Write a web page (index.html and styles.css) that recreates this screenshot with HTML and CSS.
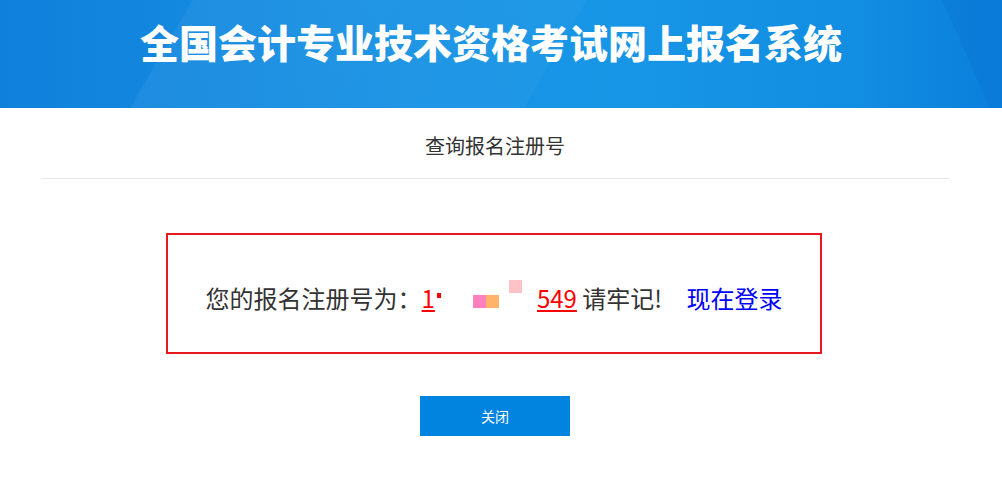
FILE: index.html
```html
<!DOCTYPE html>
<html lang="zh-CN">

<head>
    <meta charset="UTF-8">
    <meta name="viewport" content="width=device-width, initial-scale=1.0">
    <title>查询报名注册号</title>
    <link rel="stylesheet" href="styles.css">
</head>

<body>
    <div class="cabecera">
        <h1>全国会计专业技术资格考试网上报名系统</h1>
    </div>

    <div class="contenido">
        <h3 class="subtitulo">查询报名注册号</h3>

        <div class="cajaRoja">
            您的报名注册号为：<a class="numero" href="#">1<span class="oculto"><i class="p1"></i><i class="p2"></i><i class="p3"></i><i class="p4"></i></span>549</a> 请牢记!
            <a class="entrar" href="#">现在登录</a>
        </div>

        <div class="botones">
            <input type="button" class="boton" value="关闭" />
        </div>
    </div>
</body>

</html>
```

FILE: styles.css
```css
body {
    margin: 0;
    font-family: "Noto Sans CJK SC", "Microsoft YaHei", sans-serif;
    background-color: #fff;
    color: #333;
}

.cabecera {
    position: relative;
    overflow: hidden;
    height: 108px;
    background: linear-gradient(90deg, #0f80db 0%, #1790e3 35%, #1896e6 60%, #128ee2 85%, #0a7fdc 100%);
}

/* Franjas diagonales del fondo */
.cabecera::before {
    content: "";
    position: absolute;
    top: 0;
    left: 0;
    width: 100%;
    height: 100%;
    background: linear-gradient(120deg, rgba(255, 255, 255, 0) 0%, rgba(255, 255, 255, 0) 18%, rgba(255, 255, 255, 0.05) 18.2%, rgba(255, 255, 255, 0.03) 55%, rgba(255, 255, 255, 0) 55.2%);
}

.cabecera::after {
    content: "";
    position: absolute;
    top: 0;
    right: 0;
    width: 60px;
    height: 100%;
    background-color: rgba(0, 60, 160, 0.08);
    clip-path: polygon(0 0, 100% 0, 100% 100%, 80% 100%);
}

.cabecera h1 {
    position: relative;
    z-index: 1;
    margin: 0;
    padding-top: 15px;
    padding-right: 20px;
    text-align: center;
    color: #fff;
    font-size: 39px;
    line-height: 52px;
    font-weight: 900;
}

.contenido {
    width: 908px;
    margin-left: 41px;
}

.subtitulo {
    margin: 0;
    height: 70px;
    line-height: 76px;
    text-align: center;
    font-size: 20px;
    font-weight: normal;
    color: #333;
    border-bottom: solid 1px #e8e8e8;
}

.cajaRoja {
    width: 652px;
    height: 117px;
    margin: 54px 0 0 125px;
    border: solid 2px #e8181e;
    line-height: 126px;
    text-align: center;
    font-size: 24px;
    color: #333;
}

.numero {
    color: #f00;
    text-decoration: underline;
}

.oculto {
    position: relative;
    display: inline-block;
    width: 102px;
    height: 26px;
    vertical-align: -3px;
    background-color: #fff;
}

.oculto i {
    position: absolute;
    width: 13px;
    height: 13px;
}

.p1 {
    left: 2px;
    top: 8px;
    width: 4px !important;
    height: 5px !important;
    background-color: #f00;
}

.p2 {
    left: 38px;
    top: 10px;
    background-color: #ff7fbf;
}

.p3 {
    left: 51px;
    top: 10px;
    background-color: #ffb36b;
}

.p4 {
    left: 74px;
    top: -5px;
    background-color: #ffc2c6;
}

.entrar {
    margin-left: 19px;
    color: #00f;
    text-decoration: none;
}

.botones {
    margin-top: 42px;
    text-align: center;
}

.boton {
    width: 150px;
    height: 40px;
    border: none;
    background-color: #0084e0;
    color: #fff;
    font-family: "Noto Sans CJK SC", sans-serif;
    font-size: 14px;
    cursor: pointer;
}
```
